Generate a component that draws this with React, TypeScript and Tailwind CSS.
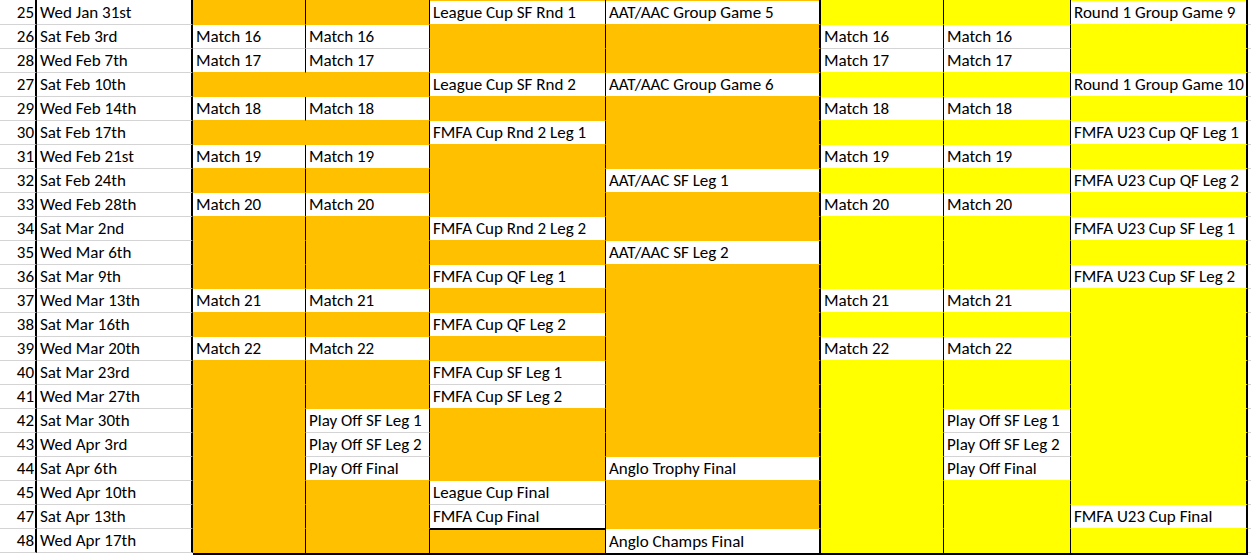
import React from 'react';

const ORANGE = 'orange';
const YELLOW = 'yellow';

const dates: Array<[number, string]> = [
    [25, 'Wed Jan 31st'],
    [26, 'Sat Feb 3rd'],
    [28, 'Wed Feb 7th'],
    [27, 'Sat Feb 10th'],
    [29, 'Wed Feb 14th'],
    [30, 'Sat Feb 17th'],
    [31, 'Wed Feb 21st'],
    [32, 'Sat Feb 24th'],
    [33, 'Wed Feb 28th'],
    [34, 'Sat Mar 2nd'],
    [35, 'Wed Mar 6th'],
    [36, 'Sat Mar 9th'],
    [37, 'Wed Mar 13th'],
    [38, 'Sat Mar 16th'],
    [39, 'Wed Mar 20th'],
    [40, 'Sat Mar 23rd'],
    [41, 'Wed Mar 27th'],
    [42, 'Sat Mar 30th'],
    [43, 'Wed Apr 3rd'],
    [44, 'Sat Apr 6th'],
    [45, 'Wed Apr 10th'],
    [47, 'Sat Apr 13th'],
    [48, 'Wed Apr 17th'],
];

const league: Record<number, string> = {
    1: 'Match 16',
    2: 'Match 17',
    4: 'Match 18',
    6: 'Match 19',
    8: 'Match 20',
    12: 'Match 21',
    14: 'Match 22',
};

const leagueWithPlayOffs: Record<number, string> = {
    ...league,
    17: 'Play Off SF Leg 1',
    18: 'Play Off SF Leg 2',
    19: 'Play Off Final',
};

const cups: Record<number, string> = {
    0: 'League Cup SF Rnd 1',
    3: 'League Cup SF Rnd 2',
    5: 'FMFA Cup Rnd 2 Leg 1',
    9: 'FMFA Cup Rnd 2 Leg 2',
    11: 'FMFA Cup QF Leg 1',
    13: 'FMFA Cup QF Leg 2',
    15: 'FMFA Cup SF Leg 1',
    16: 'FMFA Cup SF Leg 2',
    20: 'League Cup Final',
    21: 'FMFA Cup Final',
};

const trophy: Record<number, string> = {
    0: 'AAT/AAC Group Game 5',
    3: 'AAT/AAC Group Game 6',
    7: 'AAT/AAC SF Leg 1',
    10: 'AAT/AAC SF Leg 2',
    19: 'Anglo Trophy Final',
    22: 'Anglo Champs Final',
};

const youth: Record<number, string> = {
    0: 'Round 1 Group Game 9',
    3: 'Round 1 Group Game 10',
    5: 'FMFA U23 Cup QF Leg 1',
    7: 'FMFA U23 Cup QF Leg 2',
    9: 'FMFA U23 Cup SF Leg 1',
    11: 'FMFA U23 Cup SF Leg 2',
    21: 'FMFA U23 Cup Final',
};

const columns: Array<{ cells: Record<number, string>; fill: string; right: string }> = [
    { cells: league, fill: ORANGE, right: 'border-r border-r-black' },
    { cells: leagueWithPlayOffs, fill: ORANGE, right: 'border-r border-r-black' },
    { cells: cups, fill: ORANGE, right: 'border-r border-r-black' },
    { cells: trophy, fill: ORANGE, right: 'border-r-2 border-r-black' },
    { cells: league, fill: YELLOW, right: 'border-r border-r-black' },
    { cells: leagueWithPlayOffs, fill: YELLOW, right: 'border-r border-r-black' },
    { cells: youth, fill: YELLOW, right: 'border-r-2 border-r-black' },
];

const bgFor = (fill: string | null) =>
    fill === ORANGE ? 'bg-[#ffc000]' : fill === YELLOW ? 'bg-[#ffff00]' : 'bg-white';

const bottomFor = (fill: string | null) =>
    fill === ORANGE ? 'border-b-[#ffc000]' : fill === YELLOW ? 'border-b-[#ffff00]' : 'border-b-[#d4d4d4]';

export default function App() {
    const last = dates.length - 1;

    return (
        <div className="w-[1251px] h-[555px] overflow-hidden bg-white text-black font-['Carlito','Calibri','Lato',sans-serif] text-[17px]">
            <div className="grid grid-cols-[37px_156px_113px_124px_176px_215px_123px_127px_177px_1fr]">
                {/* strip of the row above */}
                <div className="h-px border-r-2 border-r-black" />
                <div className="h-px border-r-2 border-r-black" />
                {columns.map((col, c) => (
                    <div key={'top' + c} className={`h-px ${bgFor(col.fill)} ${col.right}`} />
                ))}
                <div className="h-px" />

                {dates.map(([num, date], r) => (
                    <React.Fragment key={num}>
                        <div className="h-[24px] border-b border-b-[#d4d4d4] border-r-2 border-r-black flex items-end justify-end pr-px leading-[20px] pb-px">
                            {num}
                        </div>
                        <div className="h-[24px] border-b border-b-[#d4d4d4] border-r-2 border-r-black flex items-end pl-[3px] leading-[20px] pb-px whitespace-nowrap">
                            {date}
                        </div>
                        {columns.map((col, c) => {
                            const text = col.cells[r];
                            const fill = text ? null : col.fill;
                            const nextFill = r < last ? (col.cells[r + 1] ? null : col.fill) : null;
                            let bottom = bottomFor(fill ?? nextFill);
                            let right = col.right;
                            let extra = '';
                            if (c === 0 && (r === 3 || r === 5)) right = 'border-r border-r-[#ffc000]';
                            if (c === 2 && r === 21) bottom = 'border-b-black';
                            if (c === 2 && r === 22) extra = 'shadow-[inset_0_1px_0_#000]';
                            if (r === last) bottom = 'border-b-black';
                            return (
                                <div
                                    key={c}
                                    className={`${r === last ? 'h-[26px] border-b-2 pb-px' : 'h-[24px] border-b pb-px'} ${bottom} ${right} ${bgFor(fill)} ${extra} flex items-end overflow-hidden whitespace-nowrap pl-[3px] leading-[20px]`}
                                >
                                    {text}
                                </div>
                            );
                        })}
                        <div className="h-[24px] border-b border-b-[#d4d4d4]" />
                    </React.Fragment>
                ))}
            </div>
        </div>
    );
}
